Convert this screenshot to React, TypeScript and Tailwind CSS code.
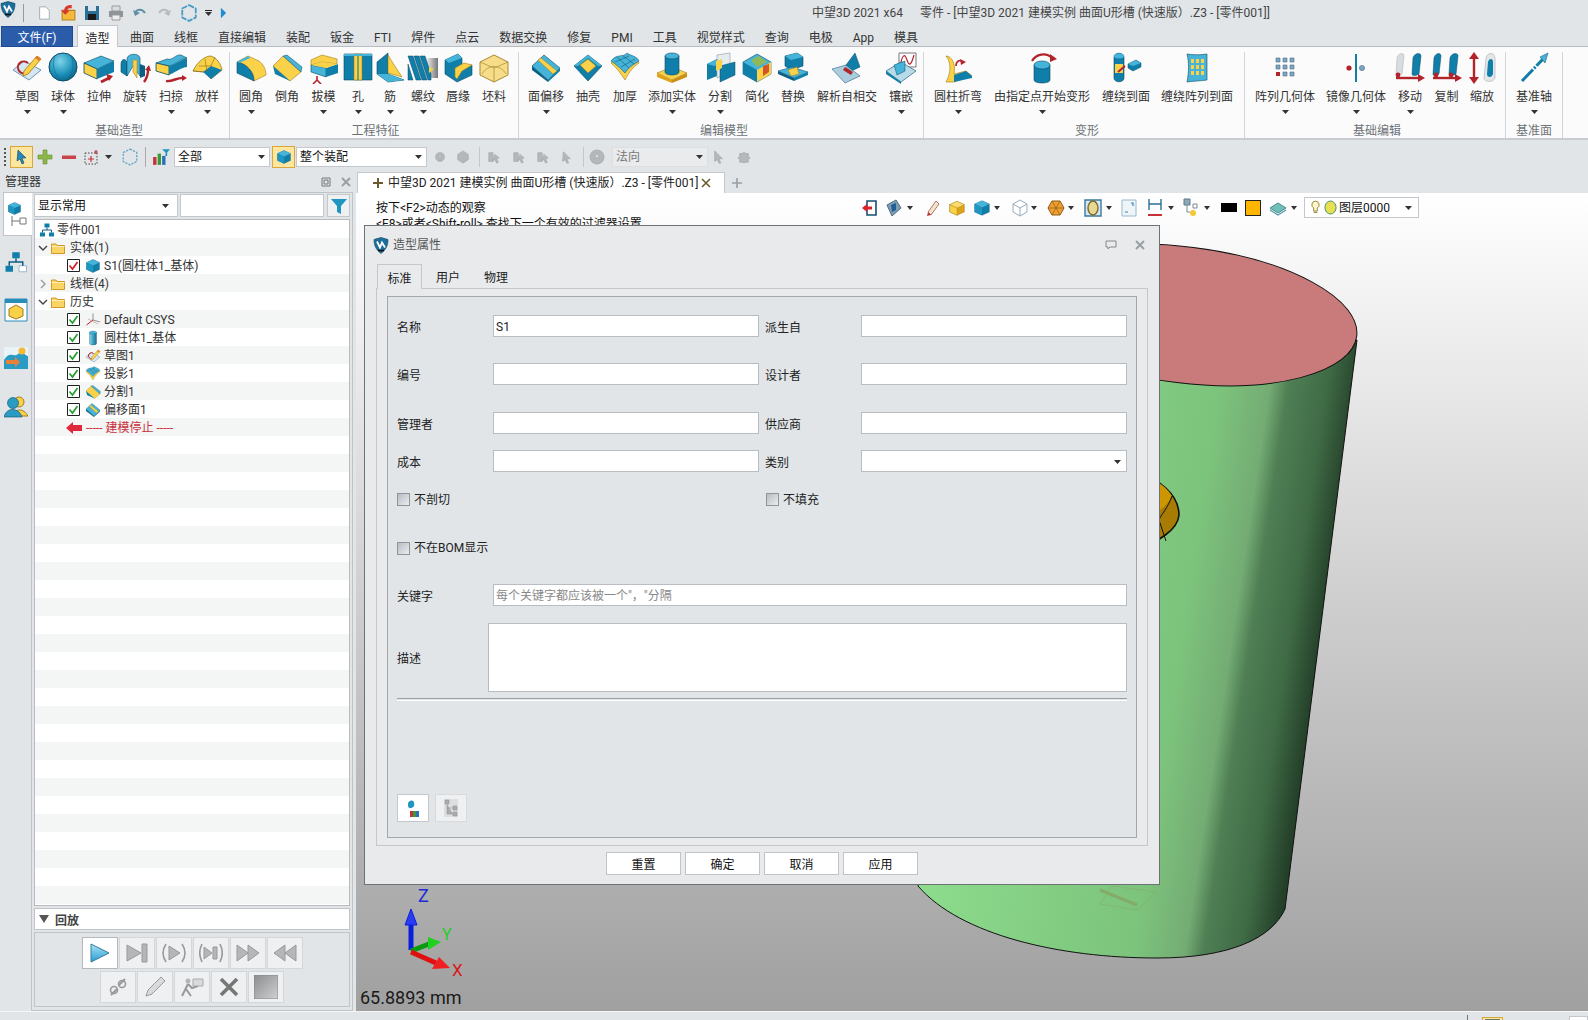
import type { ReactNode } from "react";

const T = "#46b4d8";
const S = "#0f7ea8";
const K = "#0b5f82";
const Y = "#f9d24a";
const O = "#dfa21c";
const R = "#b2242a";
const E = "#0a4a66";

const ICONS: Record<string, ReactNode> = {
  sketch: (
    <>
      <path d="M2 18L13 9L30 18L18 28Z" fill="#d5e6f3" stroke="#6e93b5" />
      <path d="M15 21a6 6 0 1 1 2-10" fill="none" stroke={R} strokeWidth="2" />
      <path d="M13 19L26 4L30 7L17 22L12 24Z" fill={Y} stroke="#b8861a" />
      <path d="M26 4L30 7L28 9L24 6Z" fill="#e8792c" />
    </>
  ),
  sphere: (
    <>
      <circle cx="16" cy="15" r="14" fill="url(#sph)" stroke={E} />
      <path d="M8 4C4 14 8 24 16 29M24 4C28 12 26 22 20 28" fill="none" stroke="#0b6a90" strokeWidth=".6" />
    </>
  ),
  extrude: (
    <>
      <path d="M1 11L18 4L31 9L14 17Z" fill={T} stroke={E} strokeWidth=".6" />
      <path d="M1 11L14 17V27L1 21Z" fill={Y} stroke={E} strokeWidth=".8" />
      <path d="M14 17L31 9V20L14 27Z" fill={S} />
      <path d="M18 30L26 26" stroke={R} strokeWidth="3" />
      <path d="M23 22L30 24L26 29Z" fill={R} />
    </>
  ),
  revolve: (
    <>
      <path d="M2 12C2 6 8 6 8 12V24L2 20Z" fill={S} stroke={E} strokeWidth=".6" />
      <path d="M8 6C10 1 20 1 21 6V24L14 14L8 24Z" fill={T} stroke={E} strokeWidth=".6" />
      <path d="M14 8H18V26L14 20Z" fill={Y} stroke="#b8861a" strokeWidth=".6" />
      <path d="M21 12L26 14V24L21 26Z" fill={K} />
      <path d="M25 30C28 26 29 22 29 18" fill="none" stroke={R} strokeWidth="2.4" />
      <path d="M26 18L30 13L32 19Z" fill={R} />
    </>
  ),
  sweep: (
    <>
      <path d="M1 11L12 7C18 9 20 2 26 3L32 6C26 6 22 12 14 14Z" fill={T} stroke={E} strokeWidth=".6" />
      <path d="M1 11L14 14V23L1 19Z" fill={Y} stroke={E} strokeWidth=".8" />
      <path d="M14 14C22 12 26 7 32 6V15C24 16 20 21 14 23Z" fill={S} />
      <path d="M11 29C18 30 22 25 29 26" fill="none" stroke={R} strokeWidth="2.4" />
      <path d="M27 23L32 26L27 29Z" fill={R} />
    </>
  ),
  loft: (
    <>
      <path d="M2 19C6 10 14 4 20 4C26 6 30 12 31 18L20 27L14 20Z" fill={Y} stroke="#8a6a10" strokeWidth=".7" />
      <path d="M12 20L20 14L31 18L20 27Z" fill={S} />
      <path d="M8 14L20 14L24 5M14 7L16 20M2 19L12 20" fill="none" stroke="#8a6a10" strokeWidth=".6" />
    </>
  ),
  fillet: (
    <>
      <path d="M2 10L13 4L24 9C28 12 31 17 31 23L19 29C19 20 12 12 2 10Z" fill={Y} stroke="#a37b14" strokeWidth=".6" />
      <path d="M2 10C12 12 19 20 19 29L2 21Z" fill={S} stroke={E} strokeWidth=".6" />
      <path d="M2 10L13 4L15 6L4 11Z" fill={T} />
    </>
  ),
  chamfer: (
    <>
      <path d="M2 14L12 4L30 20L19 29Z" fill={Y} stroke="#a37b14" strokeWidth=".6" />
      <path d="M2 14L19 29L4 22Z" fill={S} />
      <path d="M12 4L16 3L31 15L30 20Z" fill={T} stroke={E} strokeWidth=".5" />
    </>
  ),
  draft: (
    <>
      <path d="M3 8L14 3L29 7L29 12L14 10L3 13Z" fill={Y} stroke="#a37b14" strokeWidth=".6" />
      <path d="M3 13L18 16V25L3 20Z" fill={T} stroke={E} strokeWidth=".6" />
      <path d="M18 16L30 12V21L18 25Z" fill={S} />
      <path d="M3 13L18 16L30 12L14 10Z" fill={Y} />
      <path d="M9 24V28M9 28L5 32M9 28L13 32" stroke={R} strokeWidth="1.6" fill="none" />
    </>
  ),
  hole: (
    <>
      <path d="M2 2H30V28H2Z" fill={S} stroke={E} strokeWidth=".6" />
      <path d="M12 2H20V28H12Z" fill={Y} stroke="#a37b14" strokeWidth=".6" />
      <path d="M16 2V28" stroke="#0b6a90" strokeWidth="1" />
      <path d="M2 2H30V4H2Z" fill={T} />
    </>
  ),
  rib: (
    <>
      <path d="M3 10L14 1V22L30 28L14 30L3 22Z" fill={S} stroke={E} strokeWidth=".6" />
      <path d="M14 3L17 8L28 25L14 21Z" fill={Y} stroke="#a37b14" strokeWidth=".6" />
      <path d="M3 22L14 30L30 28L14 22Z" fill={T} />
    </>
  ),
  thread: (
    <>
      <path d="M20 6H31V26H20Z" fill="url(#metal)" />
      <path d="M1 4H6L14 28H9ZM7 4H12L20 28H15ZM13 4H18L24 22V28H21ZM1 12L6 28H1Z" fill={S} stroke={E} strokeWidth=".5" />
      <path d="M22 15L27 17L22 21Z" fill={Y} />
    </>
  ),
  lip: (
    <>
      <path d="M3 8L16 2L20 6V17L30 13V23L15 30L3 22Z" fill={S} stroke={E} strokeWidth=".6" />
      <path d="M13 16L22 11L30 13L20 19L15 27L13 25Z" fill={Y} stroke="#a37b14" strokeWidth=".6" />
      <path d="M3 8L16 2L20 6L7 11Z" fill={T} />
    </>
  ),
  stock: (
    <>
      <path d="M2 10L16 3L30 10V23L16 30L2 23Z" fill="#f7dc8a" stroke="#a98a30" />
      <path d="M2 10L16 16L30 10M16 16V30M4 22C10 12 22 12 28 22" fill="none" stroke="#a98a30" strokeWidth=".7" />
    </>
  ),
  offset: (
    <>
      <path d="M2 14L14 3L30 16L18 28Z" fill={T} stroke={E} strokeWidth=".6" />
      <path d="M2 14L18 28V30L2 18Z" fill={K} />
      <path d="M18 28L30 16V19L18 30Z" fill={S} />
      <path d="M8 8L11 6L27 19L23 22Z" fill={Y} stroke="#a37b14" strokeWidth=".5" />
    </>
  ),
  shell: (
    <>
      <path d="M2 14L16 3L30 14L16 29Z" fill={S} stroke={E} strokeWidth=".6" />
      <path d="M8 13L16 7L24 14L16 21Z" fill={Y} stroke="#a37b14" strokeWidth=".6" />
      <path d="M2 14L16 3L30 14L26 14L16 6L6 14Z" fill={T} />
    </>
  ),
  thicken: (
    <>
      <path d="M2 11C8 3 14 8 18 3C22 6 28 6 30 11C24 15 20 20 16 28C12 22 8 16 2 11Z" fill={Y} stroke="#a37b14" strokeWidth=".6" />
      <path d="M2 9C8 1 14 6 18 1C22 4 28 4 30 9C24 13 20 15 16 21C12 17 8 13 2 9Z" fill={T} stroke={E} strokeWidth=".5" />
      <path d="M8 5L20 16M14 4L25 12M6 10L20 4M12 15L26 7" stroke={E} strokeWidth=".5" />
    </>
  ),
  addSolid: (
    <>
      <path d="M1 21L16 15L31 21L16 28Z" fill={Y} stroke="#a37b14" strokeWidth=".6" />
      <path d="M1 21L16 28V31L1 25Z" fill={O} />
      <path d="M16 28L31 21V25L16 31Z" fill="#c98f18" />
      <path d="M9 4V20C9 24 23 24 23 20V4Z" fill={S} stroke={E} strokeWidth=".6" />
      <ellipse cx="16" cy="4" rx="7" ry="3" fill={T} stroke={E} strokeWidth=".6" />
    </>
  ),
  split: (
    <>
      <path d="M3 12L13 7V24L3 28Z" fill={S} />
      <path d="M3 12L13 7L20 10L10 14Z" fill={T} />
      <path d="M13 3L26 1V20L13 26Z" fill="#dfe6e8" fillOpacity=".75" stroke="#8a9aa0" strokeWidth=".6" />
      <path d="M16 14L31 10V23L16 30Z" fill={S} stroke={E} strokeWidth=".5" />
      <path d="M12 9L18 7V16L12 19Z" fill={Y} />
    </>
  ),
  simplify: (
    <>
      <path d="M2 10L16 2L30 10V22L16 30L2 22Z" fill={T} stroke={E} strokeWidth=".6" />
      <path d="M2 10L16 18V30L2 22Z" fill={S} />
      <path d="M16 18L30 10V22L16 30Z" fill={Y} />
      <path d="M10 8L18 4L26 10L16 15Z" fill="#8fb85a" />
      <path d="M22 14L28 12V20L22 24Z" fill="#d2552a" />
    </>
  ),
  replace: (
    <>
      <path d="M8 4L20 1L26 5V14L14 18L8 14Z" fill={S} stroke={E} strokeWidth=".6" />
      <path d="M8 4L20 1L26 5L14 8Z" fill={T} />
      <path d="M1 19L15 15L31 20L17 26Z" fill={T} stroke={E} strokeWidth=".5" />
      <path d="M1 19L17 26V29L1 22Z" fill={K} />
      <path d="M17 26L31 20V23L17 29Z" fill={S} />
      <path d="M11 18L20 15L22 22L14 24Z" fill={Y} stroke="#a37b14" strokeWidth=".5" />
    </>
  ),
  selfX: (
    <>
      <path d="M15 13L24 1L29 15L16 21Z" fill={S} stroke={E} strokeWidth=".5" />
      <path d="M1 17L15 13L29 24L14 31Z" fill="#9cc6d8" fillOpacity=".85" stroke={E} strokeWidth=".5" />
      <path d="M14 15L22 20L20 23L12 18Z" fill={R} />
    </>
  ),
  inlay: (
    <>
      <path d="M14 1H31V15H14Z" fill="#fff" stroke="#777" />
      <path d="M16 10C18 2 20 2 22 8S26 14 29 3" fill="none" stroke={R} strokeWidth="1.2" />
      <path d="M1 19L16 10L31 19L16 30Z" fill="#b7dbe8" stroke={E} strokeWidth=".6" />
      <path d="M1 19L16 30V32L1 22Z" fill={S} />
      <path d="M9 13L20 9V19L12 23Z" fill={T} stroke={E} strokeWidth=".5" />
    </>
  ),
  cylBend: (
    <>
      <path d="M4 4C10 4 14 12 12 22L24 19L30 24L12 30H4L5 28C9 20 9 10 4 4Z" fill={Y} stroke="#a37b14" strokeWidth=".6" />
      <path d="M12 23L24 19L30 24L30 26L12 30Z" fill={S} />
      <path d="M14 14C14 9 18 7 21 10" fill="none" stroke={R} strokeWidth="1.6" />
      <path d="M18 7L24 10L19 13Z" fill={R} />
    </>
  ),
  deform: (
    <>
      <path d="M8 13V28C8 32 24 32 24 28V13Z" fill={S} stroke={E} strokeWidth=".6" />
      <ellipse cx="16" cy="13" rx="8" ry="4" fill={T} stroke={E} strokeWidth=".6" />
      <path d="M6 9C10 2 20 0 26 6" fill="none" stroke={R} strokeWidth="2.2" />
      <path d="M24 2L31 7L24 10Z" fill={R} />
    </>
  ),
  wrapFace: (
    <>
      <path d="M4 5C4 0 14 0 14 5V26C14 31 4 31 4 26Z" fill={S} stroke={E} strokeWidth=".6" />
      <ellipse cx="9" cy="4" rx="5" ry="2.5" fill={T} />
      <path d="M5 12H13V21H5Z" fill={Y} />
      <path d="M18 12L26 8L31 11V15L23 19L18 16Z" fill={S} stroke={E} strokeWidth=".5" />
      <path d="M18 12L26 8L31 11L23 14Z" fill={T} />
      <path d="M15 14L8 20" stroke={R} strokeWidth="2" />
    </>
  ),
  wrapArray: (
    <>
      <path d="M6 2C12 3 20 3 26 2V28C20 29 12 29 6 30C8 20 8 10 6 2Z" fill={T} stroke={E} strokeWidth=".6" />
      <path d="M10 7h3v4h-3zM15 7h3v4h-3zM20 7h3v4h-3zM10 13h3v4h-3zM15 13h3v4h-3zM20 13h3v4h-3zM10 19h3v4h-3zM15 19h3v4h-3zM20 19h3v4h-3z" fill={Y} />
    </>
  ),
  pattern: (
    <>
      <path d="M7 6h4v4H7zM14 6h4v4h-4zM21 6h4v4h-4zM7 13h4v4H7zM14 13h4v4h-4zM21 13h4v4h-4zM14 20h4v4h-4zM21 20h4v4h-4z" fill="#7fa6c0" stroke="#476b86" strokeWidth=".6" />
      <path d="M7 20h4v4H7z" fill={R} />
    </>
  ),
  mirror: (
    <>
      <path d="M16 2V30" stroke={S} strokeWidth="2" />
      <circle cx="9" cy="16" r="2.6" fill={R} />
      <circle cx="22" cy="16" r="2.6" fill="#7fa6c0" stroke="#476b86" strokeWidth=".6" />
    </>
  ),
  move: (
    <>
      <path d="M3 6C4 1 10 0 10 4L8 22C5 24 2 24 2 22Z" fill="#d8dcde" stroke="#aab" strokeWidth=".5" />
      <path d="M19 6C20 1 27 0 27 4L25 22C22 24 18 24 18 22Z" fill={S} stroke={E} strokeWidth=".5" />
      <path d="M2 26H24" stroke={R} strokeWidth="2.4" />
      <path d="M24 22L31 26L24 30Z" fill={R} />
      <circle cx="4" cy="23" r="2.4" fill={R} />
    </>
  ),
  copy: (
    <>
      <path d="M3 6C4 1 10 0 10 4L8 22C5 24 2 24 2 22Z" fill={S} stroke={E} strokeWidth=".5" />
      <path d="M19 6C20 1 27 0 27 4L25 22C22 24 18 24 18 22Z" fill={S} stroke={E} strokeWidth=".5" />
      <path d="M2 26H24" stroke={R} strokeWidth="2.4" />
      <path d="M24 22L31 26L24 30Z" fill={R} />
      <circle cx="5" cy="23" r="2.4" fill={R} />
      <circle cx="20" cy="23" r="2.4" fill={R} />
    </>
  ),
  scale: (
    <>
      <path d="M8 5V27" stroke={R} strokeWidth="2.4" />
      <path d="M3 7L8 0L13 7ZM3 25L8 32L13 25Z" fill={R} />
      <path d="M20 6C21 0 29 0 29 6V26C27 31 18 30 18 26Z" fill="#e3e6e8" stroke="#aab" strokeWidth=".6" />
      <path d="M22 10C23 6 27 6 27 10V22C26 26 21 26 21 22Z" fill={S} />
    </>
  ),
  axis: (
    <>
      <path d="M4 29L26 6" stroke={S} strokeWidth="3" strokeDasharray="16 1.5 2 1.5" />
      <path d="M22 5L30 1L27 11Z" fill={T} stroke={E} strokeWidth=".5" />
    </>
  ),
  cube: (
    <>
      <path d="M3 9L16 3L29 9V23L16 29L3 23Z" fill={S} stroke={E} strokeWidth=".6" />
      <path d="M3 9L16 3L29 9L16 15Z" fill={T} />
      <path d="M3 9L16 15V29L3 23Z" fill="#1f95c0" />
    </>
  ),
  cyl: (
    <>
      <path d="M9 5V27C9 31 23 31 23 27V5Z" fill="url(#cylg)" stroke={E} strokeWidth=".6" />
      <ellipse cx="16" cy="5" rx="7" ry="3" fill={T} stroke={E} strokeWidth=".6" />
    </>
  ),
  yellowCube: (
    <>
      <path d="M3 10L16 4L29 10V23L16 29L3 23Z" fill={O} stroke="#8a6a10" strokeWidth=".7" />
      <path d="M3 10L16 4L29 10L16 16Z" fill="#fbdc6c" stroke="#8a6a10" strokeWidth=".5" />
      <path d="M3 10L16 16V29L3 23Z" fill={Y} stroke="#8a6a10" strokeWidth=".5" />
    </>
  ),
  folder: (
    <>
      <path d="M3 8H12L14 11H29V27H3Z" fill="#fbd466" stroke="#c98f18" strokeWidth="1.8" />
      <path d="M3 13H29" stroke="#fff3c4" strokeWidth="1.6" />
    </>
  ),
  tree: (
    <>
      <path d="M11 3H21V11H11Z" fill={S} />
      <path d="M2 21H12V29H2ZM20 21H30V29H20Z" fill={S} />
      <path d="M16 11V16M7 21V16H25V21" fill="none" stroke={K} strokeWidth="2" />
    </>
  ),
  treeWhite: (
    <>
      <path d="M11 3H21V11H11Z" fill={S} />
      <path d="M2 21H12V29H2Z" fill={S} />
      <path d="M20 21H30V29H20Z" fill="#fff" stroke="#7fa6c0" />
      <path d="M16 11V16M7 21V16H25V21" fill="none" stroke={K} strokeWidth="2" />
    </>
  ),
  csys: (
    <>
      <path d="M16 16V3" stroke="#777" strokeWidth="1.6" />
      <path d="M16 16L30 20" stroke="#777" strokeWidth="1.6" />
      <path d="M3 26L16 16" stroke={R} strokeWidth="2" />
      <path d="M6 14L26 24" stroke="#d08a6a" strokeWidth="1.2" />
    </>
  ),
};

function Ico({ n, className }: { n: string; className: string }) {
  return (
    <svg viewBox="0 0 32 32" className={className}>
      {ICONS[n]}
    </svg>
  );
}

function Caret({ className = "" }: { className?: string }) {
  return (
    <svg viewBox="0 0 7 4" className={"w-[7px] h-[4px] shrink-0 " + className}>
      <path d="M0 0H7L3.5 4Z" fill="#333" />
    </svg>
  );
}

function Logo({ className }: { className: string }) {
  return (
    <svg viewBox="0 0 16 16" className={className}>
      <path d="M1 2L8 0L15 2C15 9 12 13 8 16C4 13 1 9 1 2Z" fill="#1c6f9c" stroke="#0a3a55" strokeWidth=".6" />
      <path d="M4 4L7 10L9 5L12 10" fill="none" stroke="#fff" strokeWidth="1.8" />
      <path d="M5 13H11" stroke="#111" strokeWidth="1.6" />
    </svg>
  );
}

const TABS = ["曲面", "线框", "直接编辑", "装配", "钣金", "FTI", "焊件", "点云", "数据交换", "修复", "PMI", "工具", "视觉样式", "查询", "电极", "App", "模具"];

const GROUPS = [
  {
    label: "基础造型",
    cls: "w-[230px] pl-[9px]",
    items: [
      { n: "草图", i: "sketch", w: "w-[36px]", c: true },
      { n: "球体", i: "sphere", w: "w-[36px]", c: true },
      { n: "拉伸", i: "extrude", w: "w-[36px]", c: false },
      { n: "旋转", i: "revolve", w: "w-[36px]", c: false },
      { n: "扫掠", i: "sweep", w: "w-[36px]", c: true },
      { n: "放样", i: "loft", w: "w-[36px]", c: true },
    ],
  },
  {
    label: "工程特征",
    cls: "w-[289px] pl-[3px]",
    items: [
      { n: "圆角", i: "fillet", w: "w-[36px]", c: true },
      { n: "倒角", i: "chamfer", w: "w-[36px]", c: false },
      { n: "拔模", i: "draft", w: "w-[37px]", c: true },
      { n: "孔", i: "hole", w: "w-[32px]", c: true },
      { n: "筋", i: "rib", w: "w-[32px]", c: true },
      { n: "螺纹", i: "thread", w: "w-[34px]", c: true },
      { n: "唇缘", i: "lip", w: "w-[36px]", c: false },
      { n: "坯料", i: "stock", w: "w-[36px]", c: false },
    ],
  },
  {
    label: "编辑模型",
    cls: "w-[405px] pl-[6px]",
    items: [
      { n: "面偏移", i: "offset", w: "w-[42px]", c: true },
      { n: "抽壳", i: "shell", w: "w-[42px]", c: false },
      { n: "加厚", i: "thicken", w: "w-[32px]", c: false },
      { n: "添加实体", i: "addSolid", w: "w-[62px]", c: true },
      { n: "分割", i: "split", w: "w-[34px]", c: true },
      { n: "简化", i: "simplify", w: "w-[40px]", c: false },
      { n: "替换", i: "replace", w: "w-[32px]", c: false },
      { n: "解析自相交", i: "selfX", w: "w-[76px]", c: false },
      { n: "镶嵌", i: "inlay", w: "w-[32px]", c: true },
    ],
  },
  {
    label: "变形",
    cls: "w-[321px] pl-[6px]",
    items: [
      { n: "圆柱折弯", i: "cylBend", w: "w-[56px]", c: true },
      { n: "由指定点开始变形", i: "deform", w: "w-[112px]", c: true },
      { n: "缠绕到面", i: "wrapFace", w: "w-[56px]", c: false },
      { n: "缠绕阵列到面", i: "wrapArray", w: "w-[86px]", c: false },
    ],
  },
  {
    label: "基础编辑",
    cls: "w-[261px] pl-[4px]",
    items: [
      { n: "阵列几何体", i: "pattern", w: "w-[72px]", c: true },
      { n: "镜像几何体", i: "mirror", w: "w-[70px]", c: true },
      { n: "移动", i: "move", w: "w-[38px]", c: true },
      { n: "复制", i: "copy", w: "w-[35px]", c: false },
      { n: "缩放", i: "scale", w: "w-[36px]", c: false },
    ],
  },
  {
    label: "基准面",
    cls: "w-[57px]",
    items: [{ n: "基准轴", i: "axis", w: "w-[56px]", c: true }],
  },
];

function TitleBar() {
  return (
    <div className="h-[25px] shrink-0 flex items-center text-[#444]">
      <Logo className="w-[16px] h-[17px] -mt-[6px]" />
      <div className="ml-[7px] w-px h-[18px] bg-[#999]" />
      <svg viewBox="0 0 16 16" className="ml-[13px] w-[14px] h-[16px]">
        <path d="M3 1H10L14 5V15H3Z" fill="#fff" stroke="#9aa" />
      </svg>
      <svg viewBox="0 0 16 16" className="ml-[9px] w-[17px] h-[17px]">
        <path d="M2 6H14V15H2Z" fill="#f6b93a" stroke="#b5811c" />
        <path d="M11 1C6 1 4 3 4 6H1L5 10L9 6H7C7 4 9 4 11 4Z" fill="#d8382a" />
      </svg>
      <svg viewBox="0 0 16 16" className="ml-[7px] w-[16px] h-[16px]">
        <path d="M1 1H15V15H1Z" fill="#2a6f96" />
        <path d="M4 1H12V6H4Z" fill="#d8e4ea" />
        <path d="M4 9H12V15H4Z" fill="#1a1a1a" />
      </svg>
      <svg viewBox="0 0 16 16" className="ml-[8px] w-[16px] h-[16px]">
        <path d="M4 1H12V6H4Z" fill="#ddd" stroke="#999" />
        <path d="M1 6H15V12H1Z" fill="#8f9498" />
        <path d="M4 10H12V15H4Z" fill="#eee" stroke="#999" />
      </svg>
      <svg viewBox="0 0 16 16" className="ml-[8px] w-[16px] h-[16px]">
        <path d="M3 9C4 4 10 3 13 8" fill="none" stroke="#5f8fa8" strokeWidth="2" />
        <path d="M1 5L3 11L8 8Z" fill="#5f8fa8" />
      </svg>
      <svg viewBox="0 0 16 16" className="ml-[8px] w-[16px] h-[16px]">
        <path d="M13 9C12 4 6 3 3 8" fill="none" stroke="#b8bcc0" strokeWidth="2" />
        <path d="M15 5L13 11L8 8Z" fill="#b8bcc0" />
      </svg>
      <svg viewBox="0 0 16 16" className="ml-[8px] w-[18px] h-[20px]">
        <path d="M8 1L14 4V12L8 15L2 12V4Z" fill="none" stroke="#4a9cc4" strokeWidth="1.6" strokeDasharray="5 1" />
      </svg>
      <div className="ml-[7px] flex flex-col items-center gap-[1px]">
        <div className="w-[7px] h-px bg-[#222]" />
        <Caret />
      </div>
      <svg viewBox="0 0 8 14" className="ml-[8px] w-[7px] h-[14px]">
        <path d="M1 1L7 7L1 13Z" fill="#1f8cd0" />
      </svg>
      <span className="ml-[585px] w-[108px] whitespace-nowrap">中望3D 2021 x64</span>
      <span className="whitespace-nowrap">零件 - [中望3D 2021 建模实例 曲面U形槽 (快速版）.Z3 - [零件001]]</span>
    </div>
  );
}

function TabRow() {
  return (
    <div className="h-[22px] shrink-0 flex items-stretch border-b border-[#b9bdc1]">
      <div className="ml-[1px] w-[72px] h-[21px] mt-[1px] pt-[2px] bg-[#2a5caa] border border-[#1d4a94] text-white flex items-center justify-center">文件(F)</div>
      <div className="ml-[4px] w-[41px] h-[22px] pt-[4px] bg-[#fbfbfb] border border-b-0 border-[#c4c8cc] flex items-center justify-center text-[#222]">造型</div>
      <div className="ml-[2px] flex">
        {TABS.map((t) => (
          <div key={t} className="px-[10px] pt-[4px] flex items-center text-[#333]">
            {t}
          </div>
        ))}
      </div>
    </div>
  );
}

function Ribbon() {
  return (
    <div className="h-[93px] shrink-0 bg-[#fbfbfb] border-b-2 border-[#c8ccd0] flex items-start">
      {GROUPS.map((g) => (
        <div key={g.label} className={"mt-[5px] h-[86px] shrink-0 border-r border-[#d3d6d9] " + g.cls}>
          <div className="flex h-[72px]">
            {g.items.map((it) => (
              <div key={it.n} className={"shrink-0 flex flex-col items-center " + it.w}>
                <Ico n={it.i} className="w-[32px] h-[32px] shrink-0" />
                <div className="mt-[4px] h-[18px] leading-[18px] whitespace-nowrap text-[#333]">{it.n}</div>
                {it.c && <Caret className="mt-[4px]" />}
              </div>
            ))}
          </div>
          <div className="h-[14px] leading-[14px] text-center text-[#6d7378]">{g.label}</div>
        </div>
      ))}
    </div>
  );
}

function Combo({ text, className, muted }: { text: string; className: string; muted?: boolean }) {
  return (
    <div className={"shrink-0 flex items-center justify-between pl-[3px] pr-[4px] border " + className}>
      <span className={muted ? "text-[#777]" : "text-[#111]"}>{text}</span>
      <Caret />
    </div>
  );
}

function GrayGlyph({ className, d }: { className: string; d: string }) {
  return (
    <svg viewBox="0 0 16 16" className={"shrink-0 h-[16px] " + className}>
      <path d={d} fill="#b4b8bb" stroke="#9a9ea2" strokeWidth=".6" />
    </svg>
  );
}

function SelectBar() {
  return (
    <div className="h-[32px] shrink-0 pt-[2px] flex items-center">
      <div className="ml-[4px] w-[2px] h-[18px] border-l-2 border-dotted border-[#555]" />
      <div className="ml-[4px] w-[23px] h-[22px] bg-[#fde7a0] border border-[#d8a63a] flex items-center justify-center">
        <svg viewBox="0 0 16 16" className="w-[16px] h-[16px]">
          <path d="M4 1L12 9L8 9L10 14L8 15L6 10L3 12Z" fill="#2a86b8" stroke="#0a4a66" strokeWidth=".6" />
        </svg>
      </div>
      <svg viewBox="0 0 16 16" className="ml-[4px] w-[16px] h-[16px]">
        <path d="M6 1H10V6H15V10H10V15H6V10H1V6H6Z" fill="#8cb84a" stroke="#5f8a2a" strokeWidth=".6" />
      </svg>
      <svg viewBox="0 0 16 16" className="ml-[8px] w-[16px] h-[16px]">
        <path d="M1 6.5H15V10H1Z" fill="#c8444a" />
      </svg>
      <svg viewBox="0 0 16 16" className="ml-[7px] w-[16px] h-[16px]">
        <path d="M1 4H13V15H1Z" fill="none" stroke="#444" strokeDasharray="1.5 1.5" />
        <path d="M7 7V13M4 10H10M12 1V5M10 3H14" stroke="#c8303a" strokeWidth="1.2" />
      </svg>
      <Caret className="ml-[5px]" />
      <svg viewBox="0 0 16 16" className="ml-[9px] w-[18px] h-[18px]">
        <path d="M8 1L14 4V12L8 15L2 12V4Z" fill="none" stroke="#6aa8c8" strokeWidth="1.2" strokeDasharray="2 1" />
      </svg>
      <div className="ml-[6px] w-px h-[20px] bg-[#aaa]" />
      <svg viewBox="0 0 16 16" className="ml-[6px] w-[18px] h-[18px]">
        <path d="M1 8H4V15H1Z" fill="#c8303a" />
        <path d="M5 5H8V15H5Z" fill="#3a9a3a" />
        <path d="M9 7H12V15H9Z" fill="#2a6fb8" />
        <path d="M9 1H16L13.5 4V7H12V4Z" fill="#1f95c0" />
      </svg>
      <Combo text="全部" className="ml-[4px] w-[96px] h-[20px] bg-white border-[#c4c8cc]" />
      <div className="ml-[2px] w-[23px] h-[22px] bg-[#fde7a0] border border-[#d8a63a] flex items-center justify-center">
        <Ico n="cube" className="w-[16px] h-[16px]" />
      </div>
      <Combo text="整个装配" className="ml-[1px] w-[131px] h-[20px] bg-white border-[#c4c8cc]" />
      <GrayGlyph className="ml-[7px] w-[12px]" d="M8 2a6 6 0 1 0 .01 0ZM7 5H9V9H7Z" />
      <GrayGlyph className="ml-[10px] w-[14px]" d="M8 1L14 5V11L8 15L2 11V5Z" />
      <div className="ml-[9px] w-px h-[20px] bg-[#c4c8cc]" />
      <GrayGlyph className="ml-[7px] w-[14px]" d="M2 3H7V13H2ZM9 5L14 9L11 10L13 14L11 15L9 11L7 12Z" />
      <GrayGlyph className="ml-[11px] w-[14px]" d="M2 3H7V13H2ZM9 5L14 9L11 10L13 14L11 15L9 11L7 12Z" />
      <GrayGlyph className="ml-[10px] w-[14px]" d="M2 3H7V13H2ZM9 5L14 9L11 10L13 14L11 15L9 11L7 12Z" />
      <GrayGlyph className="ml-[9px] w-[14px]" d="M5 2L13 10L9 10L11 15L9 15L7 11L4 13Z" />
      <div className="ml-[10px] w-px h-[20px] bg-[#c4c8cc]" />
      <GrayGlyph className="ml-[5px] w-[16px]" d="M8 1a7 7 0 1 0 .01 0ZM8 4L11 10L8 8L5 10Z" />
      <Combo text="法向" muted className="ml-[7px] w-[96px] h-[20px] bg-[#e9ebed] border-[#dcdfe2]" />
      <GrayGlyph className="ml-[4px] w-[14px]" d="M3 1L12 10L8 10L10 15L8 15L6 11L3 13Z" />
      <GrayGlyph className="ml-[11px] w-[14px]" d="M8 2L10 4L13 4L13 7L15 9L13 11L13 14L10 14L8 15L6 14L3 14L3 11L1 9L3 7L3 4L6 4Z" />
    </div>
  );
}

function Check({ red }: { red?: boolean }) {
  return (
    <svg viewBox="0 0 13 13" className="w-[13px] h-[13px] shrink-0">
      <path d="M.5 .5H12.5V12.5H.5Z" fill="#fff" stroke="#222" />
      <path d="M2.5 6.5L5.5 10L10.5 3" fill="none" stroke={red ? "#d0202a" : "#22a030"} strokeWidth="1.7" />
    </svg>
  );
}

function Chevron({ open }: { open: boolean }) {
  return (
    <svg viewBox="0 0 10 10" className="ml-[3px] w-[10px] h-[10px] shrink-0">
      <path d={open ? "M1 3L5 7L9 3" : "M3 1L7 5L3 9"} fill="none" stroke={open ? "#444" : "#999"} strokeWidth="1.4" />
    </svg>
  );
}

const HISTORY = [
  { t: "Default CSYS", i: "csys" },
  { t: "圆柱体1_基体", i: "cyl" },
  { t: "草图1", i: "sketch" },
  { t: "投影1", i: "thicken" },
  { t: "分割1", i: "chamfer" },
  { t: "偏移面1", i: "offset" },
];

function Row({ shade, children }: { shade?: boolean; children?: ReactNode }) {
  return <div className={"h-[18px] shrink-0 pt-px flex items-center text-[#333] " + (shade ? "bg-[#f4f5f5]" : "bg-white")}>{children}</div>;
}

function Tree() {
  const blanks = Array.from({ length: 26 }, (_, i) => i);
  return (
    <div className="flex-1 min-h-0 overflow-hidden bg-white border border-[#b8bcc0] flex flex-col">
      <Row>
        <Ico n="tree" className="ml-[4px] w-[16px] h-[16px]" />
        <span className="ml-[2px]">零件001</span>
      </Row>
      <Row shade>
        <Chevron open />
        <Ico n="folder" className="ml-[2px] w-[16px] h-[16px]" />
        <span className="ml-[4px]">实体(1)</span>
      </Row>
      <Row>
        <div className="ml-[32px]" />
        <Check red />
        <Ico n="cube" className="ml-[5px] w-[16px] h-[16px]" />
        <span className="ml-[3px]">S1(圆柱体1_基体)</span>
      </Row>
      <Row shade>
        <Chevron open={false} />
        <Ico n="folder" className="ml-[2px] w-[16px] h-[16px]" />
        <span className="ml-[4px]">线框(4)</span>
      </Row>
      <Row>
        <Chevron open />
        <Ico n="folder" className="ml-[2px] w-[16px] h-[16px]" />
        <span className="ml-[4px]">历史</span>
      </Row>
      {HISTORY.map((h, i) => (
        <Row key={h.t} shade={i % 2 === 0}>
          <div className="ml-[32px]" />
          <Check />
          <Ico n={h.i} className="ml-[5px] w-[16px] h-[16px]" />
          <span className="ml-[3px]">{h.t}</span>
        </Row>
      ))}
      <Row shade>
        <svg viewBox="0 0 16 12" className="ml-[31px] w-[16px] h-[12px]">
          <path d="M0 6L7 0V3H16V9H7V12Z" fill="#e0283c" />
        </svg>
        <span className="ml-[4px] text-[#c8303a]">----- 建模停止 -----</span>
      </Row>
      {blanks.map((i) => (
        <Row key={i} shade={i % 2 === 1} />
      ))}
    </div>
  );
}

function PlayBtn({ active, children }: { active?: boolean; children: ReactNode }) {
  return (
    <div className={"w-[36px] h-[32px] shrink-0 border flex items-center justify-center " + (active ? "bg-white border-[#b4b8bc]" : "bg-[#eff0f1] border-[#d4d7da]")}>
      <svg viewBox="0 0 24 24" className="w-[24px] h-[24px]">
        {children}
      </svg>
    </div>
  );
}

const G = "#b4b6b8";

function Playback() {
  return (
    <div className="h-[75px] shrink-0 border border-[#c0c4c8] flex flex-col items-center gap-[2px] pt-[4px]">
      <div className="flex gap-px">
        <PlayBtn active>
          <path d="M3 3L21 12L3 21Z" fill="url(#play)" stroke="#3a7a9c" />
        </PlayBtn>
        <PlayBtn>
          <path d="M2 4L16 12L2 20Z" fill={G} stroke="#999" />
          <path d="M17 3H22V21H17Z" fill={G} stroke="#999" />
        </PlayBtn>
        <PlayBtn>
          <path d="M7 5L18 12L7 19Z" fill={G} stroke="#999" />
          <path d="M4 3C0 9 0 15 4 21M20 3C24 9 24 15 20 21" fill="none" stroke="#999" strokeWidth="1.6" />
        </PlayBtn>
        <PlayBtn>
          <path d="M5 6L13 12L5 18Z" fill={G} stroke="#999" />
          <path d="M14 6H18V18H14Z" fill={G} stroke="#999" />
          <path d="M3 3C0 9 0 15 3 21M21 3C24 9 24 15 21 21" fill="none" stroke="#999" strokeWidth="1.6" />
        </PlayBtn>
        <PlayBtn>
          <path d="M1 4L12 12L1 20ZM12 4L23 12L12 20Z" fill={G} stroke="#999" />
        </PlayBtn>
        <PlayBtn>
          <path d="M23 4L12 12L23 20ZM12 4L1 12L12 20Z" fill={G} stroke="#999" />
        </PlayBtn>
      </div>
      <div className="flex gap-px">
        <PlayBtn>
          <path d="M5 20L11 14M13 10L19 4" stroke="#999" strokeWidth="2" />
          <circle cx="8" cy="15" r="3.5" fill="none" stroke="#999" strokeWidth="1.6" />
          <circle cx="16" cy="9" r="3.5" fill="none" stroke="#999" strokeWidth="1.6" />
        </PlayBtn>
        <PlayBtn>
          <path d="M3 21L5 15L18 2L22 6L9 19Z" fill="#d8dadc" stroke="#999" />
        </PlayBtn>
        <PlayBtn>
          <circle cx="8" cy="6" r="2.5" fill={G} />
          <path d="M8 9L5 15L2 21M8 9L12 13L18 11M6 14L11 21" fill="none" stroke="#999" strokeWidth="2" />
          <path d="M13 4H23V11H13Z" fill="#d8dadc" stroke="#aaa" />
        </PlayBtn>
        <PlayBtn>
          <path d="M4 4L20 20M20 4L4 20" stroke="#777" strokeWidth="3.6" />
        </PlayBtn>
        <PlayBtn>
          <path d="M0 0H24V24H0Z" fill="url(#stopg)" stroke="#888" />
        </PlayBtn>
      </div>
    </div>
  );
}

function Manager() {
  return (
    <div className="w-[353px] shrink-0 flex flex-col">
      <div className="h-[20px] shrink-0 flex items-center pl-[5px] text-[#333]">
        <span>管理器</span>
        <svg viewBox="0 0 10 10" className="ml-[280px] w-[10px] h-[10px]">
          <path d="M1 1H9V9H1ZM3 3V7H7V3Z" fill="none" stroke="#777" />
        </svg>
        <svg viewBox="0 0 12 12" className="ml-[9px] w-[12px] h-[12px]">
          <path d="M2 2L10 10M10 2L2 10" stroke="#9aa0a4" strokeWidth="2" />
        </svg>
      </div>
      <div className="flex-1 min-h-0 flex">
        <div className="w-[31px] shrink-0 flex flex-col items-center">
          <div className="relative ml-[3px] w-[29px] h-[44px] -mr-px bg-white border border-r-0 border-[#c0c4c8] flex items-center justify-center">
            <div className="flex flex-col items-center">
              <Ico n="cube" className="w-[15px] h-[15px] -ml-[8px]" />
              <svg viewBox="0 0 20 12" className="w-[20px] h-[12px]">
                <path d="M4 0V10M4 5H12M12 2H18V8H12Z" fill="none" stroke="#777" />
              </svg>
            </div>
          </div>
          <div className="mt-[2px] h-[48px] flex items-center">
            <Ico n="treeWhite" className="w-[24px] h-[24px]" />
          </div>
          <div className="h-[48px] flex items-center">
            <svg viewBox="0 0 24 24" className="w-[24px] h-[24px]">
              <path d="M1 1H23V23H1Z" fill="#fff" stroke="#2a8cb8" />
              <path d="M1 1H23V5H1Z" fill="#2a8cb8" />
              <path d="M5 11L12 7L19 11V18L12 21L5 18Z" fill={Y} stroke="#a37b14" />
            </svg>
          </div>
          <div className="h-[48px] flex items-center">
            <svg viewBox="0 0 24 24" className="w-[24px] h-[24px]">
              <path d="M0 1H24V23H0Z" fill="#2a9cc4" />
              <path d="M0 14C6 4 10 12 14 8S22 10 24 10V1H0Z" fill="#e8f4f8" />
              <circle cx="18" cy="5" r="3.5" fill="#f5b932" />
              <path d="M2 14H11V11L16 16L11 21V18H2Z" fill="#e8803a" />
            </svg>
          </div>
          <div className="h-[48px] flex items-center">
            <svg viewBox="0 0 24 24" className="w-[24px] h-[24px]">
              <circle cx="15" cy="8" r="5" fill={Y} stroke="#a37b14" />
              <path d="M10 22C10 14 20 14 24 22Z" fill={Y} stroke="#a37b14" />
              <circle cx="9" cy="9" r="5.5" fill="#2a9cc4" stroke={E} strokeWidth=".6" />
              <path d="M0 23C2 13 15 13 18 23Z" fill="#2a9cc4" stroke={E} strokeWidth=".6" />
            </svg>
          </div>
        </div>
        <div className="w-[322px] shrink-0 border border-[#c0c4c8] px-[2px] pt-px pb-[3px] flex flex-col gap-[2px]">
          <div className="h-[23px] shrink-0 flex">
            <div className="w-[144px] border border-[#c4c8cc] bg-white flex items-center justify-between pl-[3px] pr-[8px] text-[#111]">
              <span>显示常用</span>
              <Caret />
            </div>
            <div className="ml-[2px] w-[144px] border border-[#c4c8cc] bg-white" />
            <div className="ml-[3px] w-[23px] border border-[#c4c8cc] bg-[#eef0f1] flex items-center justify-center">
              <svg viewBox="0 0 18 18" className="w-[18px] h-[18px]">
                <path d="M1 2H17L11 9V17L7 15V9Z" fill="#1f95c0" />
              </svg>
            </div>
          </div>
          <Tree />
          <div className="h-[22px] shrink-0 bg-white border border-[#c0c4c8] flex items-center pl-[4px] font-bold text-[#444]">
            <svg viewBox="0 0 10 8" className="w-[10px] h-[8px]">
              <path d="M0 0H10L5 8Z" fill="#555" />
            </svg>
            <span className="ml-[6px] pt-[3px]">回放</span>
          </div>
          <Playback />
        </div>
      </div>
    </div>
  );
}

function ViewCaret({ className }: { className: string }) {
  return (
    <svg viewBox="0 0 6 4" className={"w-[6px] h-[4px] shrink-0 " + className}>
      <path d="M0 0H6L3 4Z" fill="#333" />
    </svg>
  );
}

function ViewTools() {
  return (
    <div className="absolute left-[505px] top-[4px] flex items-center">
      <svg viewBox="0 0 16 16" className="w-[16px] h-[16px]">
        <path d="M6 1H15V15H6Z" fill="#fff" stroke="#14506e" strokeWidth="1.6" />
        <path d="M1 8L6 4V6.5H11V9.5H6V12Z" fill="#e0202a" />
      </svg>
      <svg viewBox="0 0 18 18" className="ml-[8px] w-[18px] h-[18px]">
        <path d="M2 6L11 1L16 9L7 17Z" fill="#7f9db0" stroke="#4f6d80" />
        <path d="M6 6L11 4V11L7 13Z" fill="#1f5f94" />
      </svg>
      <ViewCaret className="ml-[4px]" />
      <svg viewBox="0 0 14 18" className="ml-[13px] w-[14px] h-[18px]">
        <path d="M2 13L10 2L13 5L5 16Z" fill="#f3e3d0" stroke="#b07a60" />
        <path d="M2 13L5 16L1 17Z" fill="#c8303a" />
      </svg>
      <Ico n="yellowCube" className="ml-[8px] w-[18px] h-[18px]" />
      <Ico n="cube" className="ml-[7px] w-[18px] h-[18px]" />
      <ViewCaret className="ml-[3px]" />
      <svg viewBox="0 0 18 18" className="ml-[11px] w-[18px] h-[18px]">
        <path d="M2 5L9 1L16 5V13L9 17L2 13ZM2 5L9 9L16 5M9 9V17" fill="#fff" stroke="#9ab" />
      </svg>
      <ViewCaret className="ml-[2px]" />
      <svg viewBox="0 0 18 18" className="ml-[10px] w-[18px] h-[18px]">
        <path d="M5 2H13L17 9L13 16H5L1 9Z" fill="#f0a030" stroke="#8a5a10" />
        <path d="M5 2L13 16M13 2L5 16M1 9H17" stroke="#8a5a10" strokeWidth=".7" />
      </svg>
      <ViewCaret className="ml-[3px]" />
      <svg viewBox="0 0 18 18" className="ml-[10px] w-[18px] h-[18px]">
        <path d="M1 1H17V17H1Z" fill="#d8e8f0" stroke="#3a7a9c" strokeWidth="1.4" />
        <ellipse cx="9" cy="9" rx="5" ry="7" fill="#e8d890" stroke="#7a6a30" strokeWidth="1.4" />
      </svg>
      <ViewCaret className="ml-[4px]" />
      <svg viewBox="0 0 16 18" className="ml-[9px] w-[16px] h-[18px]">
        <path d="M1 1H15V17H1Z" fill="#eef4f8" stroke="#9ab8c8" />
        <path d="M4 13H7M10 4H12V7" stroke="#2a8cb8" strokeWidth="1.2" fill="none" />
      </svg>
      <svg viewBox="0 0 16 20" className="ml-[10px] w-[16px] h-[20px]">
        <path d="M2 1V12M14 1V12M2 6H14" stroke="#2a6f96" strokeWidth="1.4" fill="none" />
        <path d="M1 17H15" stroke="#c8303a" strokeWidth="2" />
      </svg>
      <ViewCaret className="ml-[5px]" />
      <svg viewBox="0 0 16 20" className="ml-[8px] w-[16px] h-[20px]">
        <path d="M2 1H8V7H2Z" fill="#8fa8b8" stroke="#5a7a8c" />
        <path d="M5 7V14H8M11 6H15V10H11Z" fill="none" stroke="#7a8a94" />
        <circle cx="11" cy="15" r="3" fill="#f5c932" />
      </svg>
      <ViewCaret className="ml-[6px]" />
      <div className="ml-[11px] w-[16px] h-[9px] bg-black" />
      <div className="ml-[8px] w-[16px] h-[16px] bg-[#ffb400] border border-[#222]" />
      <svg viewBox="0 0 18 18" className="ml-[8px] w-[18px] h-[18px]">
        <path d="M1 9L9 4L17 9L9 14Z" fill="#6fc0b8" stroke="#4a8a90" />
        <path d="M1 11L9 16L17 11" fill="none" stroke="#5a9aa8" strokeWidth="1.4" />
      </svg>
      <ViewCaret className="ml-[4px]" />
      <div className="ml-[7px] w-[115px] h-[21px] bg-white border border-[#c4c8cc] flex items-center pl-[6px] pr-[6px] text-[#111]">
        <svg viewBox="0 0 10 16" className="w-[9px] h-[15px] shrink-0">
          <path d="M5 1a4 4 0 0 1 2 7.5V12H3V8.5A4 4 0 0 1 5 1Z" fill="#fff7c8" stroke="#8a7a30" />
          <path d="M3 13.5H7" stroke="#8a7a30" />
        </svg>
        <svg viewBox="0 0 14 16" className="ml-[4px] w-[13px] h-[15px] shrink-0">
          <ellipse cx="7" cy="8" rx="6" ry="7" fill="#e8e050" stroke="#3a8a6a" />
        </svg>
        <span className="ml-[2px] flex-1">图层0000</span>
        <Caret />
      </div>
    </div>
  );
}

function Part() {
  return (
    <svg viewBox="356 193 1232 818" className="absolute inset-0 w-full h-full">
      <defs>
        <linearGradient id="body" gradientUnits="userSpaceOnUse" x1="950" y1="500" x2="1350" y2="560">
          <stop offset="0" stopColor="#8fdf8f" />
          <stop offset=".62" stopColor="#7cc37c" />
          <stop offset=".74" stopColor="#74ac74" />
          <stop offset=".785" stopColor="#4f7f54" />
          <stop offset=".88" stopColor="#3f6a45" />
          <stop offset=".96" stopColor="#233f28" />
        </linearGradient>
      </defs>
      <path d="M1010 340H1357L1285 909C1272 938 1230 958 1157 958C1060 958 960 935 918 886Z" fill="url(#body)" stroke="#111" strokeWidth="1" />
      <ellipse cx="1185" cy="315" rx="173" ry="68" transform="rotate(7 1185 315)" fill="#c97b7b" stroke="#111" strokeWidth="1" />
      <path d="M1130 470C1160 478 1179 495 1179 515C1178 530 1160 540 1130 555Z" fill="#a87c04" stroke="#111" strokeWidth="1.6" />
      <path d="M1130 472C1150 476 1165 484 1172 496C1165 510 1150 518 1130 522Z" fill="#cc9600" />
      <path d="M1172 496C1168 508 1160 516 1159 520M1159 520L1166 541" fill="none" stroke="#111" strokeWidth="1" />
      <g fill="none" stroke="#88a060" strokeOpacity=".7">
        <path d="M1100 890L1137 905" strokeWidth="3" />
        <path d="M1112 886L1155 892L1138 910L1100 904Z" strokeWidth=".6" />
      </g>
      <path d="M411 950V918" stroke="#0a1ee0" strokeWidth="5" />
      <path d="M411 909L417 925H405Z" fill="#2a3cf0" stroke="#0a1ee0" />
      <path d="M411 951L434 942" stroke="#0a9a10" strokeWidth="5" />
      <path d="M441 942L428 950L428 937Z" fill="#20d020" />
      <path d="M411 952L436 963" stroke="#e01010" strokeWidth="5" />
      <path d="M450 968L432 969L439 957Z" fill="#f02020" />
    </svg>
  );
}

function Viewport() {
  return (
    <div className="flex-1 min-w-0 ml-[3px] flex flex-col">
      <div className="h-[21px] shrink-0 flex items-end">
        <div className="ml-px w-[368px] h-[21px] bg-white border border-b-0 border-[#c4c8cc] flex items-center text-[#222]">
          <svg viewBox="0 0 12 12" className="ml-[14px] w-[12px] h-[12px]">
            <path d="M6 1V11M1 6H11" stroke="#6b5a2e" strokeWidth="2" />
          </svg>
          <span className="ml-[4px] w-[313px] whitespace-nowrap">中望3D 2021 建模实例 曲面U形槽 (快速版）.Z3 - [零件001]</span>
          <svg viewBox="0 0 10 10" className="w-[10px] h-[10px]">
            <path d="M1 1L9 9M9 1L1 9" stroke="#6b5a2e" strokeWidth="1.6" />
          </svg>
        </div>
        <svg viewBox="0 0 12 12" className="ml-[6px] mb-[4px] w-[12px] h-[12px]">
          <path d="M6 1V11M1 6H11" stroke="#9a9ea2" strokeWidth="1.6" />
        </svg>
      </div>
      <div className="relative flex-1 min-h-0 overflow-hidden bg-linear-to-b from-white to-[#a0a0a0]">
        <Part />
        <ViewTools />
        <div className="relative pl-[20px] pt-[7px] leading-[16px] text-[#111]">
          <div>按下&lt;F2&gt;动态的观察</div>
          <div>&lt;F8&gt;或者&lt;Shift-roll&gt; 查找下一个有效的过滤器设置.</div>
        </div>
        <span className="absolute left-[62px] top-[693px] text-[18px] leading-[20px] text-[#1c2cd8]">Z</span>
        <span className="absolute left-[86px] top-[733px] text-[16px] leading-[18px] text-[#20d020]">Y</span>
        <span className="absolute left-[96px] top-[768px] text-[17px] leading-[18px] text-[#d81818]">X</span>
        <span className="absolute left-[4px] bottom-[3px] text-[18px] leading-[20px] text-[#1a1a1a]">65.8893 mm</span>
      </div>
    </div>
  );
}

function Input({ className, children }: { className: string; children?: ReactNode }) {
  return <div className={"shrink-0 bg-white border border-[#b9bdc1] flex items-center pl-[2px] pt-[2px] " + className}>{children}</div>;
}

function Field({ label, right, className, caret, value }: { label: string; right: string; className: string; caret?: boolean; value?: string }) {
  return (
    <div className={"flex items-center " + className}>
      <div className="w-[96px] shrink-0 pt-[4px]">{label}</div>
      <Input className="w-[266px] h-[22px]">{value}</Input>
      <div className="w-[102px] shrink-0 pl-[6px] pt-[4px]">{right}</div>
      <Input className="w-[266px] h-[22px] justify-end pr-[5px]">{caret && <Caret />}</Input>
    </div>
  );
}

function Box() {
  return <div className="w-[13px] h-[13px] shrink-0 border border-[#8f9498] bg-linear-to-br from-[#b8bcc0] to-[#eceef0]" />;
}

function Dialog() {
  return (
    <div className="absolute left-[364px] top-[225px] w-[796px] h-[660px] bg-[#e8eaec] border border-[#6f7275] flex flex-col text-[#222]">
      <div className="h-[38px] shrink-0 flex items-center pl-[8px]">
        <Logo className="w-[16px] h-[17px]" />
        <span className="ml-[4px] text-[#555]">造型属性</span>
        <svg viewBox="0 0 12 12" className="ml-[664px] w-[12px] h-[12px]">
          <path d="M1 2H11V8H5L3 10V8H1Z" fill="none" stroke="#888" />
        </svg>
        <svg viewBox="0 0 12 12" className="ml-[17px] w-[12px] h-[12px]">
          <path d="M2 2L10 10M10 2L2 10" stroke="#9aa0a4" strokeWidth="2" />
        </svg>
      </div>
      <div className="h-[24px] shrink-0 flex ml-[12px]">
        <div className="relative w-[45px] h-[25px] pt-[4px] bg-[#e8eaec] border border-b-0 border-[#c4c8cc] flex items-center justify-center">标准</div>
        <div className="ml-[14px] w-[24px] pt-[4px] flex items-center">用户</div>
        <div className="ml-[24px] w-[24px] pt-[4px] flex items-center">物理</div>
      </div>
      <div className="ml-[11px] w-[772px] h-[558px] shrink-0 border border-[#c4c8cc] p-[7px] pl-[10px]">
        <div className="w-[750px] h-[542px] border border-[#a4a8ac] bg-[#e1e5e8] pl-[9px] flex flex-col">
          <Field label="名称" right="派生自" value="S1" className="mt-[18px]" />
          <Field label="编号" right="设计者" className="mt-[26px]" />
          <Field label="管理者" right="供应商" className="mt-[27px]" />
          <Field label="成本" right="类别" caret className="mt-[16px]" />
          <div className="mt-[20px] h-[14px] flex items-center">
            <div className="w-[369px] flex items-center gap-[4px]">
              <Box />
              <span className="pt-[2px]">不剖切</span>
            </div>
            <Box />
            <span className="ml-[4px] pt-[2px]">不填充</span>
          </div>
          <div className="mt-[35px] h-[14px] flex items-center gap-[4px]">
            <Box />
            <span>不在BOM显示</span>
          </div>
          <div className="mt-[29px] flex items-center">
            <div className="w-[96px] shrink-0 pt-[4px]">关键字</div>
            <Input className="w-[634px] h-[22px] text-[#888]">每个关键字都应该被一个"，"分隔</Input>
          </div>
          <div className="mt-[17px] flex items-center">
            <div className="w-[91px] shrink-0 pt-[2px]">描述</div>
            <Input className="w-[639px] h-[69px]" />
          </div>
          <div className="mt-[6px] w-[730px] h-[3px] shrink-0 border-t border-[#9a9ea2] border-b border-b-white" />
          <div className="mt-[93px] flex gap-[6px]">
            <div className="w-[32px] h-[28px] bg-white border border-[#c4c8cc] flex flex-col items-center justify-center">
              <svg viewBox="0 0 16 20" className="w-[16px] h-[20px]">
                <path d="M3 6C3 2 9 1 9 5C10 8 8 10 5 10C3 10 3 8 3 6Z" fill="#1f95c0" />
                <path d="M5 13H8V19H5Z" fill="#c8303a" />
                <path d="M8 13H11V19H8Z" fill="#3a9a3a" />
                <path d="M11 13H14V19H11Z" fill="#2a6fb8" />
              </svg>
            </div>
            <div className="w-[32px] h-[28px] bg-[#eff0f1] border border-[#d8dbde] flex items-center justify-center">
              <svg viewBox="0 0 18 20" className="w-[18px] h-[20px]">
                <path d="M2 1H16V19H2Z" fill="#dcdee0" />
                <path d="M3 2H7V6H3ZM11 8H15V12H11ZM11 14H15V18H11ZM5 6V16H11M5 10H11" fill="#a8acae" stroke="#999" strokeWidth=".6" />
              </svg>
            </div>
          </div>
        </div>
      </div>
      <div className="mt-[6px] pl-[241px] flex gap-[4px]">
        {["重置", "确定", "取消", "应用"].map((b) => (
          <div key={b} className="w-[75px] h-[23px] pt-[3px] bg-white border border-[#c0c4c8] flex items-center justify-center text-[#111]">
            {b}
          </div>
        ))}
      </div>
    </div>
  );
}

function StatusBar() {
  return (
    <div className="h-[9px] shrink-0 overflow-hidden border-t border-[#f5f6f7] flex items-start pl-[1467px]">
      <div className="mt-[3px] w-px h-[6px] bg-[#777]" />
      <div className="ml-[14px] mt-[5px] w-[21px] h-[6px] bg-[#fde7a0] border border-[#d8a63a]">
        <div className="mx-[2px] mt-[1px] h-[4px] bg-[#6a7a60]" />
      </div>
      <div className="ml-[10px] mt-[8px] w-[15px] h-[2px] bg-[#b4b6b8]" />
      <div className="ml-[15px] mt-[8px] w-[14px] h-[2px] bg-[#4a78b8]" />
      <div className="ml-[12px] mt-[4px] w-[19px] h-[6px] bg-white border border-[#c4c8cc]" />
    </div>
  );
}

export default function App() {
  return (
    <div className="relative w-[1588px] h-[1020px] overflow-hidden bg-[#e1e5e8] flex flex-col text-[12px] leading-[16px] font-['Roboto','Noto_Sans_CJK_SC',sans-serif]">
      <svg className="w-0 h-0 shrink-0">
        <defs>
          <radialGradient id="sph" cx=".4" cy=".3" r=".8">
            <stop offset="0" stopColor="#7fd4ea" />
            <stop offset=".6" stopColor="#1a8fb8" />
            <stop offset="1" stopColor="#0a5878" />
          </radialGradient>
          <linearGradient id="metal" x1="0" x2="1" y1="0" y2="0">
            <stop offset="0" stopColor="#e8e8e8" />
            <stop offset="1" stopColor="#777" />
          </linearGradient>
          <linearGradient id="cylg" x1="0" x2="1" y1="0" y2="0">
            <stop offset="0" stopColor="#7fd4ea" />
            <stop offset="1" stopColor="#0f6f94" />
          </linearGradient>
          <linearGradient id="play" x1="0" x2="0" y1="0" y2="1">
            <stop offset="0" stopColor="#a8e4f4" />
            <stop offset="1" stopColor="#2a9cd4" />
          </linearGradient>
          <linearGradient id="stopg" x1="0" x2="1" y1="0" y2="1">
            <stop offset="0" stopColor="#8a8c8e" />
            <stop offset="1" stopColor="#cfd1d3" />
          </linearGradient>
        </defs>
      </svg>
      <TitleBar />
      <TabRow />
      <Ribbon />
      <SelectBar />
      <div className="flex-1 min-h-0 flex">
        <Manager />
        <Viewport />
      </div>
      <StatusBar />
      <Dialog />
    </div>
  );
}
